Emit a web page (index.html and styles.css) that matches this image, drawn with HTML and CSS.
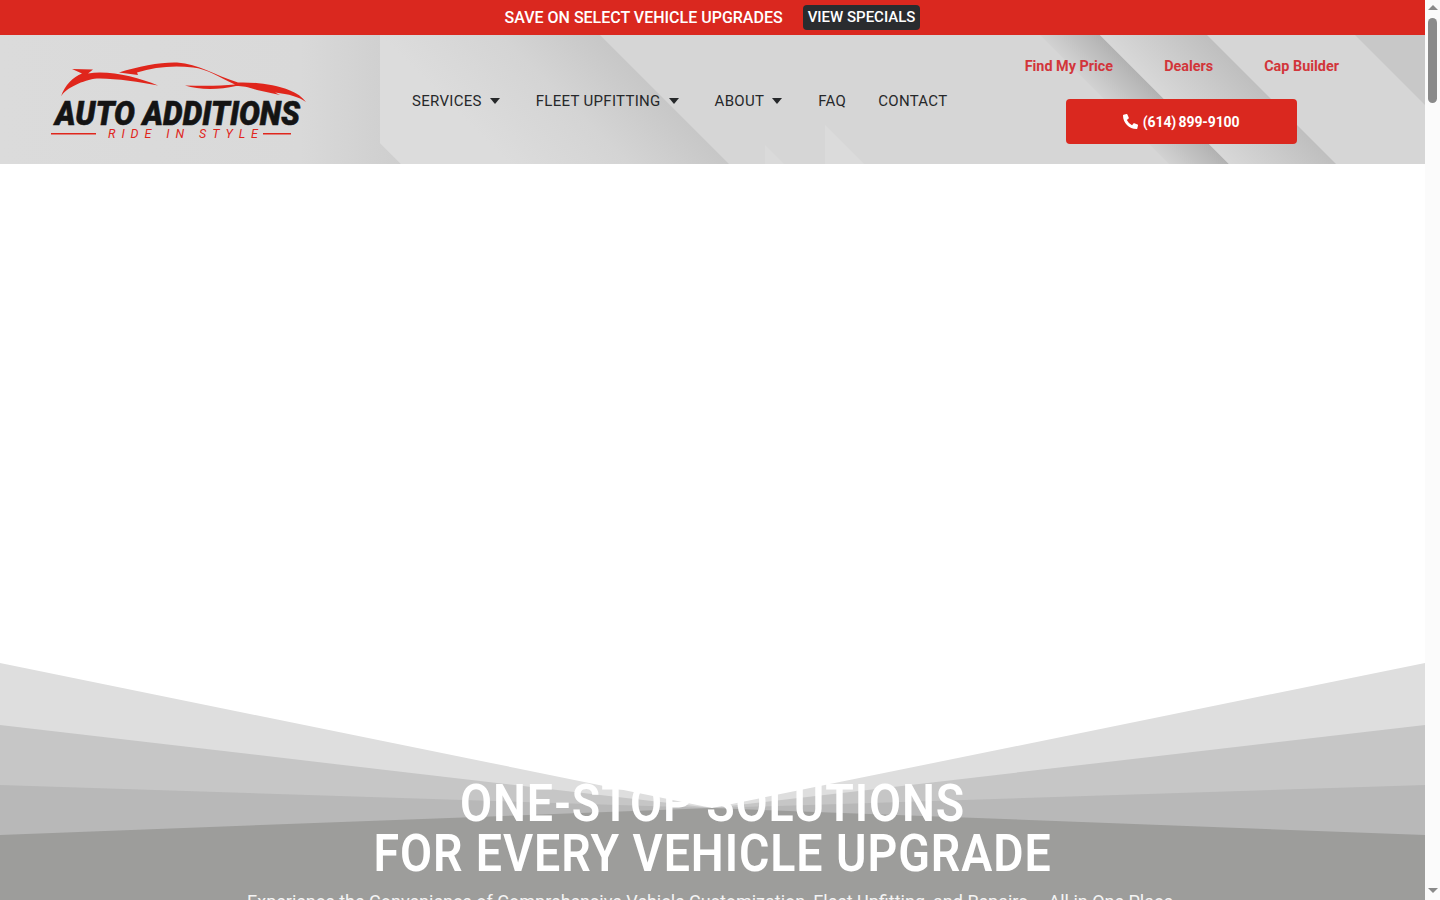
FILE: index.html
```html
<!DOCTYPE html>
<html lang="en">
<head>
  <meta charset="UTF-8" />
  <meta name="viewport" content="width=device-width, initial-scale=1" />
  <title>Auto Additions</title>
  <link rel="stylesheet" href="styles.css">
</head>
<body>
  <!-- Promo bar -->
  <div class="promo">
    <span class="promo-text">SAVE ON SELECT VEHICLE UPGRADES</span>
    <a class="promo-btn" href="#">VIEW SPECIALS</a>
  </div>

  <!-- Header -->
  <header class="header">
    <svg class="header-bg" viewBox="0 0 1425 129" preserveAspectRatio="none" aria-hidden="true">
      <defs>
        <linearGradient id="panel" x1="0" y1="0" x2="1" y2="0">
          <stop offset="0" stop-color="#dbdbdb"/>
          <stop offset=".75" stop-color="#d9d9d9"/>
          <stop offset="1" stop-color="#cecece"/>
        </linearGradient>
        <linearGradient id="bandA" gradientUnits="userSpaceOnUse" x1="380" y1="0" x2="490" y2="-110">
          <stop offset="0" stop-color="#dcdcdc"/>
          <stop offset=".55" stop-color="#d4d4d4"/>
          <stop offset="1" stop-color="#c7c7c7"/>
        </linearGradient>
        <linearGradient id="bandB" gradientUnits="userSpaceOnUse" x1="1040" y1="0" x2="1070" y2="-30">
          <stop offset="0" stop-color="#d2d2d2"/>
          <stop offset="1" stop-color="#b2b2b2"/>
        </linearGradient>
        <linearGradient id="bandC" gradientUnits="userSpaceOnUse" x1="1100" y1="0" x2="1153" y2="-53">
          <stop offset="0" stop-color="#d8d8d8"/>
          <stop offset="1" stop-color="#bfbfbf"/>
        </linearGradient>
      </defs>
      <polygon points="0,0 380,0 380,108 401,129 0,129" fill="url(#panel)"/>
      <polygon points="380,0 600,0 729,129 401,129 380,108" fill="url(#bandA)"/>
      <polygon points="765,129 765,110 784,129" fill="#dadada"/>
      <polygon points="825,129 825,90 864,129" fill="#dbdbdb"/>
      <polygon points="1040,0 1100,0 1229,129 1169,129" fill="url(#bandB)"/>
      <polygon points="1100,0 1207,0 1336,129 1229,129" fill="url(#bandC)"/>
      <polygon points="1355,0 1425,0 1425,70" fill="#c8c8c8"/>
    </svg>

    <a class="logo" href="#">
      <svg viewBox="0 0 260 80" width="260" height="80" role="img" aria-label="Auto Additions">
        <path class="car" d="M12 36.500C16 25 24 17 33 13.500L23 9 44 9.500 39 13.500C60 10 88 17 109 25.500 90 22 65 18 48 18.500 34 20 17 28 12 36.500Z"/>
        <path class="car" d="M70 12.500C90 6 112 2 128 2.500 150 4 165 15 189 22.500 205 22 225 24 241 30.500 248 33 253 37 257 42 250 37 240 34 226 32.500L231 35 208 30C199 27 194 26 187 26 170 30 150 30 136 25.500 155 26 172 26 186 24.500 170 17 158 9 144 7.500 125 5 105 7 88 12.500L89 15Z"/>
        <text class="logo-name" x="6" y="65" textLength="245" lengthAdjust="spacingAndGlyphs">AUTO ADDITIONS</text>
        <rect class="logo-rule" x="2" y="73" width="45" height="1.500"/>
        <rect class="logo-rule" x="214" y="73" width="28" height="1.500"/>
        <text class="logo-tag" x="59" y="77.500" textLength="150">RIDE IN STYLE</text>
      </svg>
    </a>

    <nav class="nav">
      <a href="#">SERVICES <i class="caret"></i></a>
      <a href="#">FLEET UPFITTING <i class="caret"></i></a>
      <a href="#">ABOUT <i class="caret"></i></a>
      <a href="#">FAQ</a>
      <a href="#">CONTACT</a>
    </nav>

    <div class="header-right">
      <div class="toplinks">
        <a href="#">Find My Price</a>
        <a href="#">Dealers</a>
        <a href="#">Cap Builder</a>
      </div>
      <a class="call-btn" href="#">
        <svg viewBox="0 0 512 512" width="15" height="15" aria-hidden="true"><path d="M497.39 361.8l-112-48a24 24 0 0 0-28 6.9l-49.6 60.6A370.66 370.66 0 0 1 130.6 204.11l60.6-49.6a23.94 23.94 0 0 0 6.9-28l-48-112A24.16 24.16 0 0 0 122.6.61l-104 24A24 24 0 0 0 0 48c0 256.5 207.9 464 464 464a24 24 0 0 0 23.4-18.6l24-104a24.29 24.29 0 0 0-14.01-27.6z"/></svg>
        <span class="call-num">(614) 899-9100</span>
      </a>
    </div>
  </header>

  <!-- Hero -->
  <section class="hero">
    <svg class="hero-bg" viewBox="0 0 1425 401" preserveAspectRatio="none" aria-hidden="true">
      <polygon points="0,0 712,145 1425,0 1425,401 0,401" fill="#dedede"/>
      <polygon points="0,62 712,145 1425,62 1425,401 0,401" fill="#c6c6c6"/>
      <polygon points="0,122 712,145 1425,122 1425,401 0,401" fill="#b8b8b8"/>
      <polygon points="0,172 712,145 1425,172 1425,401 0,401" fill="#9d9d9b"/>
    </svg>
    <div class="hero-copy">
      <h1>ONE-STOP SOLUTIONS<br>FOR EVERY VEHICLE UPGRADE</h1>
      <p>Experience the Convenience of Comprehensive Vehicle Customization, Fleet Upfitting, and Repairs – All in One Place</p>
    </div>
  </section>

  <!-- Rest of the page, below the fold -->
  <section class="rest"></section>

  <!-- Scrollbar as it shows in the window -->
  <div class="scrollbar" aria-hidden="true">
    <i class="scroll-up"></i>
    <i class="scroll-thumb"></i>
    <i class="scroll-down"></i>
  </div>
</body>
</html>
```

FILE: styles.css
```css
/* Base */
body {
  margin: 0 15px 0 0;
  padding: 0;
  background: #fff;
  font-family: Roboto, "Liberation Sans", Arial, sans-serif;
  color: #222;
}
a {
  text-decoration: none;
  color: inherit;
}
/* Promo bar */
.promo {
  height: 35px;
  background: #da281f;
  display: flex;
  align-items: center;
  justify-content: center;
  gap: 20px;
  color: #fff;
}
.promo-text {
  font-size: 16px;
  font-weight: 500;
}
.promo-btn {
  background: #2a2c2f;
  border-radius: 4px;
  padding: 0 5px;
  height: 25px;
  line-height: 24px;
  font-size: 15px;
  font-weight: 500;
}
/* Header */
.header {
  position: relative;
  height: 129px;
  background: #d6d6d6;
  display: flex;
  align-items: center;
  overflow: hidden;
}
.header-bg {
  position: absolute;
  left: 0;
  top: 0;
  width: 100%;
  height: 100%;
}
.logo {
  position: relative;
  margin-left: 49px;
  width: 260px;
  height: 80px;
  flex: none;
}
.logo svg {
  display: block;
  overflow: visible;
}
.car {
  fill: #e0261c;
}
.logo-name {
  font-family: Roboto, sans-serif;
  font-weight: 900;
  font-style: italic;
  font-size: 34px;
  fill: #141414;
  stroke: #141414;
  stroke-width: .6px;
}
.logo-rule {
  fill: #e0261c;
}
.logo-tag {
  font-family: Roboto, sans-serif;
  font-style: italic;
  font-size: 12.5px;
  fill: #e0261c;
}
.nav {
  position: relative;
  margin-left: 103px;
  margin-top: 2px;
  display: flex;
  gap: 32px;
  font-size: 15px;
  letter-spacing: .3px;
  color: #26282a;
}
.nav a {
  display: flex;
  align-items: center;
  gap: 8px;
}
.caret {
  width: 0;
  height: 0;
  margin-right: 4px;
  border-left: 5.5px solid transparent;
  border-right: 5.5px solid transparent;
  border-top: 6px solid #26282a;
}
.header-right {
  position: relative;
  margin-left: auto;
  margin-right: 86px;
  margin-top: 2px;
  display: flex;
  flex-direction: column;
  align-items: flex-start;
  gap: 24px;
}
.toplinks {
  display: flex;
  gap: 51px;
  font-size: 14.4px;
  font-weight: 700;
  color: #d2353a;
}
.call-btn {
  margin-left: 41px;
  width: 231px;
  height: 45px;
  background: #da281f;
  border-radius: 4px;
  color: #fff;
  font-size: 14px;
  font-weight: 700;
  display: flex;
  align-items: center;
  justify-content: center;
  gap: 5px;
}
.call-btn svg {
  fill: #fff;
}
.call-num {
  padding-top: 2px;
  word-spacing: -1px;
  letter-spacing: -.1px;
}
/* Hero */
.hero {
  position: relative;
  height: 900px;
  overflow: hidden;
}
.hero-bg {
  position: absolute;
  left: 0;
  top: 499px;
  width: 100%;
  height: 401px;
}
.hero-copy {
  position: relative;
  padding-top: 615px;
  text-align: center;
  color: #fff;
}
.hero-copy h1 {
  margin: 0;
  font-size: 52px;
  line-height: 50px;
  font-weight: 600;
  letter-spacing: 1px;
  transform: scaleX(.895);
}
.hero-copy p {
  margin: 12px 5px 0 0;
  font-size: 18px;
  color: #f4f4f4;
}
.rest {
  height: 7300px;
  background: #fff;
}
/* Scrollbar */
.scrollbar {
  position: fixed;
  right: 0;
  top: 0;
  width: 15px;
  height: 900px;
  background: #fbfbfb;
}
.scroll-up,
.scroll-down {
  position: absolute;
  left: 3px;
  width: 0;
  height: 0;
  border-left: 5px solid transparent;
  border-right: 5px solid transparent;
}
.scroll-up {
  top: 5px;
  border-bottom: 5px solid #8a8a8a;
}
.scroll-down {
  bottom: 7px;
  border-top: 5px solid #8a8a8a;
}
.scroll-thumb {
  position: absolute;
  left: 3px;
  top: 18px;
  width: 9px;
  height: 85px;
  border-radius: 5px;
  background: #8a8a8a;
}
```
